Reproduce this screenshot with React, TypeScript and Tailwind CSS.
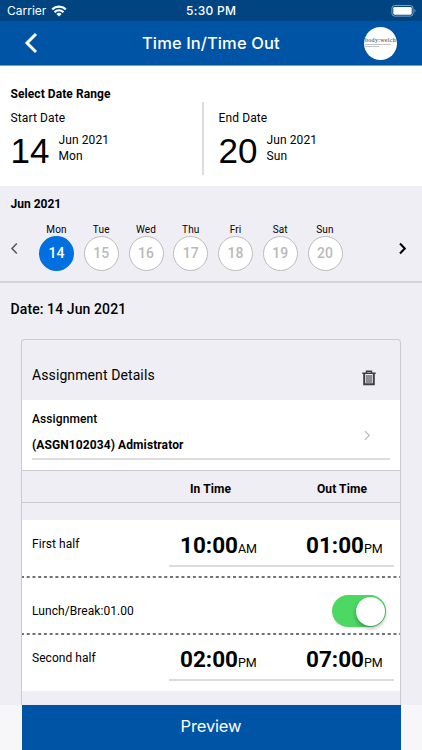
import React from "react";

const days = [
  { name: "Mon", date: 14 },
  { name: "Tue", date: 15 },
  { name: "Wed", date: 16 },
  { name: "Thu", date: 17 },
  { name: "Fri", date: 18 },
  { name: "Sat", date: 19 },
  { name: "Sun", date: 20 },
];

function StatusBar() {
  return (
    <div className="flex h-[21px] shrink-0 items-center bg-[#004482] pr-[5px] pl-[7px] font-['Inter',sans-serif] text-[12px] leading-[21px] text-white">
      <div className="flex w-[179px] items-center gap-[5px]">
        <span>Carrier</span>
        <svg width="16" height="12" viewBox="0 0 16 12" fill="none" stroke="white">
          <path d="M1.2 4.4a9.8 9.8 0 0 1 13.6 0" strokeWidth="2.2" />
          <path d="M3.5 7.2a6.3 6.3 0 0 1 9 0" strokeWidth="2" />
          <path d="M8 11.6 5.4 9a3.6 3.6 0 0 1 5.2 0Z" fill="white" stroke="none" />
        </svg>
      </div>
      <span className="font-medium tracking-[0.3px]">5:30 PM</span>
      <svg className="ml-auto" width="26" height="12" viewBox="0 0 26 12" fill="none">
        <rect x="0.9" y="0.5" width="21.2" height="10.6" rx="2.8" stroke="#7fa2c4" />
        <rect x="2.3" y="1.9" width="18.4" height="7.8" rx="1.4" fill="white" />
        <path d="M23.5 4v3.6c1.3-.5 1.3-3.1 0-3.6Z" fill="#7fa2c4" />
      </svg>
    </div>
  );
}

function Header() {
  return (
    <header className="flex h-[45px] shrink-0 items-center border-b border-[#6ba0d6] bg-[#0054a6] pr-[25px] pl-[24px] text-white">
      <svg className="w-[118px] shrink-0" width="118" height="22" viewBox="0 0 118 22" fill="none" stroke="white" strokeWidth="3">
        <path d="M12 2 3 11l9 9" />
      </svg>
      <h1 className="font-['Inter',sans-serif] text-[16.5px] leading-[22px] font-medium tracking-[0.1px] whitespace-nowrap">Time In/Time Out</h1>
      <div className="ml-auto flex size-[33px] flex-col items-start justify-center overflow-hidden rounded-full bg-white px-px pb-[2px] text-[#333]">
        <span className="font-['Liberation_Serif',serif] text-[6px] leading-[6px] tracking-[0.3px] whitespace-nowrap">body:welch</span>
        <div className="mt-px h-px w-[26px] bg-[#c4c4c4]" />
        <div className="mt-px h-px w-[14px] bg-[#c4c4c4]" />
      </div>
    </header>
  );
}

function RangeDate({ label, day, month, weekday }: { label: string; day: string; month: string; weekday: string }) {
  return (
    <div className="flex-1">
      <div className="h-[16px] text-[12px] leading-[16px] tracking-[0.12px]">{label}</div>
      <div className="mt-[5px] flex">
        <span className="w-[48px] font-['Liberation_Sans',sans-serif] text-[35px] leading-[39px]">{day}</span>
        <div className="pt-px text-[12px] leading-[16px] tracking-[0.1px]">
          <div>{month}</div>
          <div>{weekday}</div>
        </div>
      </div>
    </div>
  );
}

function DateRange() {
  return (
    <section className="h-[120px] shrink-0 bg-white pt-[20px] pl-[10.5px]">
      <h2 className="h-[16px] text-[12px] leading-[16px] font-bold tracking-[0.07px]">Select Date Range</h2>
      <div className="flex">
        <div className="flex w-[191.5px] pt-[8px]">
          <RangeDate label="Start Date" day="14" month="Jun 2021" weekday="Mon" />
        </div>
        <div className="h-[73px] w-[2px] bg-[#dcdcdc]" />
        <div className="flex flex-1 pt-[8px] pl-[14.5px]">
          <RangeDate label="End Date" day="20" month="Jun 2021" weekday="Sun" />
        </div>
      </div>
    </section>
  );
}

function WeekStrip() {
  return (
    <section className="h-[97px] shrink-0 border-b-2 border-[#d3d2d8] pt-[10px]">
      <h2 className="pl-[10.5px] text-[12px] leading-[16px] font-bold">Jun 2021</h2>
      <div className="flex pt-[10px] pl-[10px]">
        <svg className="mt-[20px] mr-[20px]" width="9" height="13" viewBox="0 0 9 13" fill="none" stroke="#555" strokeWidth="1.5">
          <path d="M6.8 1.5 2 6.5l4.8 5" />
        </svg>
        <div className="flex gap-[9.75px]">
          {days.map((day, index) => (
            <div key={day.date} className="flex flex-col items-center">
              <span className="h-[14px] text-[10px] leading-[15px] tracking-[0.15px]">{day.name}</span>
              <span
                className={
                  index === 0
                    ? "flex size-[35px] items-center justify-center rounded-full bg-[#0070e0] text-[14px] font-medium text-white"
                    : "flex size-[35px] items-center justify-center rounded-full border border-[#bcbcbc] bg-white text-[14px] font-medium text-[#bababa]"
                }
              >
                {day.date}
              </span>
            </div>
          ))}
        </div>
        <svg className="mt-[20px] mr-[15px] ml-auto" width="9" height="13" viewBox="0 0 9 13" fill="none" stroke="black" strokeWidth="2">
          <path d="m2 1.5 4.8 5-4.8 5" />
        </svg>
      </div>
    </section>
  );
}

function Time({ value, period }: { value: string; period: string }) {
  return (
    <div className="whitespace-nowrap">
      <span className="text-[22.5px] font-bold">{value}</span>
      <span className="text-[12.5px] tracking-[-0.2px]">{period}</span>
    </div>
  );
}

function HalfRow({ label, start, end, startPeriod }: { label: string; start: string; end: string; startPeriod: string }) {
  return (
    <div className="flex justify-between pr-[6px] pl-[10px]">
      <span className="pt-[16px] text-[12px] leading-[16px] tracking-[0.05px]">{label}</span>
      <div className="flex h-[47px] w-[225px] border-b-2 border-[#dcdcdc] pt-[10px] pl-[11px] leading-[31px]">
        <div className="w-[126px]">
          <Time value={start} period={startPeriod} />
        </div>
        <Time value={end} period="PM" />
      </div>
    </div>
  );
}

function DashedLine() {
  return (
    <svg className="-mx-px block shrink-0" width="380" height="2" stroke="#444" strokeWidth="1.4">
      <line x1="0" y1="1" x2="380" y2="1" strokeDasharray="3 2.73" />
    </svg>
  );
}

function AssignmentCard() {
  return (
    <section className="mx-[21px] mt-[20px] flex h-[366px] shrink-0 flex-col overflow-hidden rounded-t-[4px] border border-b-0 border-[#cbcad0]">
      <div className="flex h-[60px] shrink-0 items-center justify-between pt-[10px] pr-[24.5px] pl-[10px]">
        <h3 className="text-[14px] leading-[20px] tracking-[0.1px]">Assignment Details</h3>
        <svg className="mt-[6px]" width="14" height="16" viewBox="0 0 14 16" fill="none" stroke="#3f3f42">
          <path d="M0.3 3.2h13.4M4.5 3V1.2h5V3" strokeWidth="1.4" />
          <path d="M2.2 3.5v10.8h9.6V3.5" strokeWidth="2" />
          <path d="M5 5v8M7 5v8M9 5v8" strokeWidth="1.1" />
        </svg>
      </div>
      <div className="h-[70px] shrink-0 bg-white pt-[11px] pr-[10px] pl-[10px]">
        <div className="flex h-[49px] items-start justify-between border-b-2 border-[#dcdcdc] pr-[19px]">
          <div className="text-[12px] leading-[16px]">
            <div className="font-medium tracking-[0.1px]">Assignment</div>
            <div className="pt-[10px] font-bold tracking-[0.1px]">(ASGN102034) Admistrator</div>
          </div>
          <svg className="mt-[19px]" width="8" height="11" viewBox="0 0 8 11" fill="none" stroke="#c0c0c0" strokeWidth="1.3">
            <path d="m1.8 1 4.5 4.5L1.8 10" />
          </svg>
        </div>
      </div>
      <div className="flex h-[33px] shrink-0 items-center border-y border-[#cbcad0] pt-[4px] text-[12px] font-bold tracking-[0.1px]">
        <span className="box-content w-[127px] pl-[168px] whitespace-nowrap">In Time</span>
        <span className="whitespace-nowrap">Out Time</span>
      </div>
      <div className="h-[17px] shrink-0" />
      <div className="flex h-[171px] shrink-0 flex-col bg-white">
        <HalfRow label="First half" start="10:00" startPeriod="AM" end="01:00" />
        <div className="h-[9px]" />
        <DashedLine />
        <div className="flex h-[55px] items-center justify-between pt-[11px] pr-[14px] pl-[10px]">
          <span className="text-[12px] leading-[16px] tracking-[0.07px]">Lunch/Break:01.00</span>
          <div className="flex h-[32px] w-[54px] items-center justify-end rounded-full bg-[#4bd863] pr-px">
            <div className="size-[29px] rounded-full bg-white shadow-[0_2px_4px_rgba(0,0,0,0.35)]" />
          </div>
        </div>
        <DashedLine />
        <div className="-mt-px">
          <HalfRow label="Second half" start="02:00" startPeriod="PM" end="07:00" />
        </div>
      </div>
    </section>
  );
}

export default function App() {
  return (
    <div className="flex h-[750px] w-[422px] flex-col overflow-hidden bg-[#efeef4] font-['Roboto',sans-serif] text-black">
      <StatusBar />
      <Header />
      <DateRange />
      <WeekStrip />
      <h2 className="mt-[16px] shrink-0 pl-[10.5px] text-[14px] leading-[20px] font-medium tracking-[0.1px]">Date: 14 Jun 2021</h2>
      <AssignmentCard />
      <footer className="flex h-[45px] shrink-0 bg-[#f7f7f9] px-[21.5px]">
        <button className="flex-1 bg-[#0054a6] pb-[2px] font-['Inter',sans-serif] text-[16.5px] tracking-[-0.15px] text-white">Preview</button>
      </footer>
    </div>
  );
}
